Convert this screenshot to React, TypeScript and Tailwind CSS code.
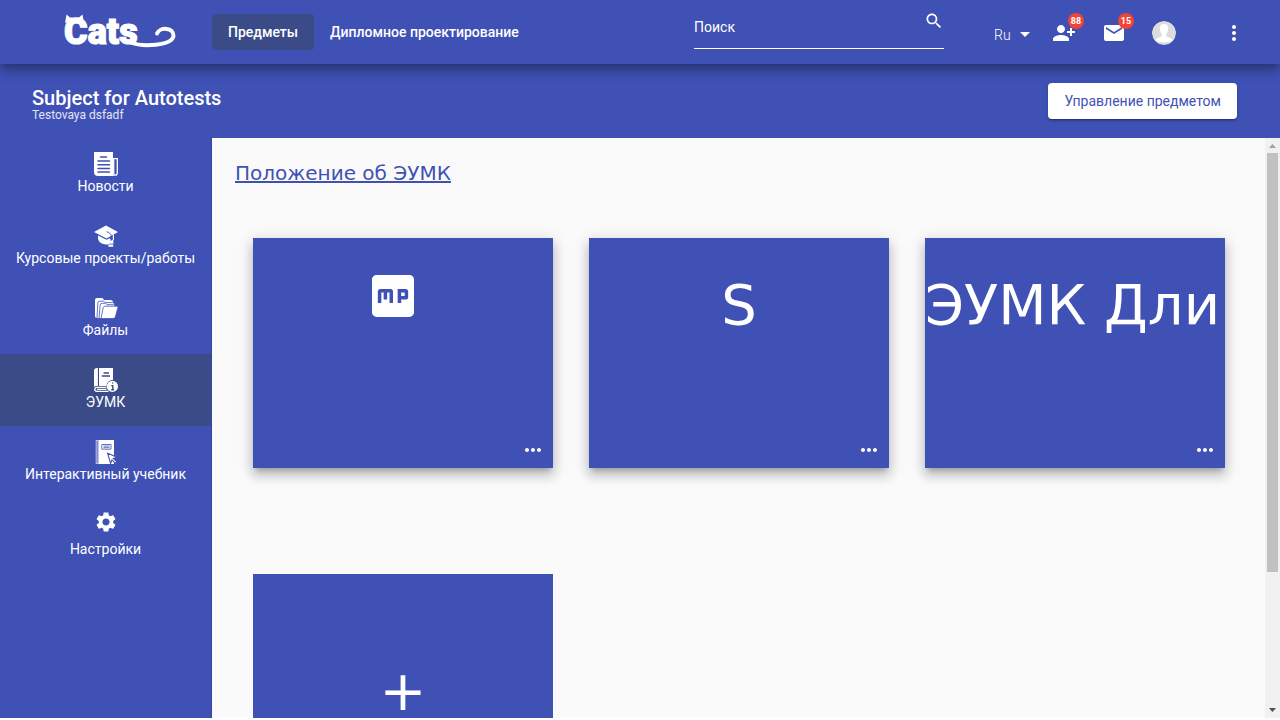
import type { ReactNode } from "react";

const P = ({ d }: { d: string }) => <path d={d} />;

function Icon({ children, className = "size-6" }: { children: ReactNode; className?: string }) {
  return (
    <svg viewBox="0 0 24 24" fill="currentColor" aria-hidden="true" className={`block shrink-0 ${className}`}>
      {children}
    </svg>
  );
}

function Logo() {
  return (
    <svg viewBox="0 0 114 46" className="block h-[46px] w-[114px]" role="img" aria-label="Cats" fill="#fff">
      <text x="2" y="35" fontSize="36" fontWeight="900" stroke="#fff" strokeWidth="1.2" className="font-['Roboto']">
        Cats
      </text>
      <path d="M3 14 L4.500 5.500 L8 8.500 H17 L20.500 5.500 L22 14 L16 11 H9Z" />
      <path
        d="M69 33.500 C80 38 110 37 111.500 27 C112 18.500 98 17.500 95 24.500"
        fill="none"
        stroke="#fff"
        strokeWidth="4"
        strokeLinecap="round"
      />
    </svg>
  );
}

const NewsIcon = () => (
  <Icon>
    <P d="M0 0h19v20.500q0 2.500 2 3.500H4q-4 0-4-4z" />
    <path d="M19.700 6.700h3.600v13.500q0 3-1.900 3t-1.700-3z" fill="#3f51b5" stroke="currentColor" strokeWidth="1.300" />
    <path d="M6.500 5h6M4 9H15.500M4 12.700H15.500M4 16.400H15.500M4 20H15.500" stroke="#3f51b5" strokeWidth="1.500" strokeLinecap="round" />
  </Icon>
);

const CapIcon = () => (
  <Icon>
    <P d="M12 1.500 24 8 12.500 14.400 0 8z" />
    <P d="M4 11.400l8.500 4.400 3.200-1.600 1 1.400-1.200 4.300q-6 2-10-1.800Q4 16.200 4 14z" />
    <path d="M12.500 7.800q4.700.8 5 5v3.500" fill="none" stroke="#3f51b5" strokeWidth="0.900" />
    <P d="M18.800 11.200l1.200-.7v5.400l-1.200.8zM15 17.400l4-1.600.6 3.700-3.800.2zM14.400 20.500h4.800v2.300h-4.800z" />
  </Icon>
);

const FilesIcon = () => (
  <Icon>
    <P d="M1 20V4q0-2 2-2h5.500L10 4h6.500q2.300 0 2.500 2v16H3q-2 0-2-2z" />
    <g stroke="#3f51b5" strokeWidth="0.800">
      <path d="M3 22.500 3.800 7q.1-1.800 2-1.800h4l1.200 1.400h7.700q2 0 1.800 2L19 22.500z" />
      <path d="M5 22.500 6.200 9q.2-1.700 2-1.700h3.500l1.300 1.400h6.500q1.800 0 1.600 1.800L19 22.500z" />
      <path d="M10.800 10.200h12.400q1 0 .8 1l-2.600 9.600q-.5 1.700-2.200 1.700H7l2.200-11q.4-1.300 1.600-1.300z" />
    </g>
  </Icon>
);

const BookInfoIcon = () => (
  <Icon>
    <P d="M0 3q0-3 3-3h.9v18H3q-2 0-3 1z" />
    <P d="M5 0h14v11.800q-6 1-6.500 6.200H5z" />
    <path d="M12.500 19.300H3q-2.200 0-2.200 2T3 23.300h11.500M3 21.300h9.500" fill="none" stroke="currentColor" strokeWidth="1.300" />
    <path d="M9.500 5h5.500M7.800 8H16" stroke="#3a4b87" strokeWidth="1.300" />
    <circle cx="18.400" cy="18.400" r="5.600" />
    <path d="M17.300 17.600h1.500v4M17.200 21.700h2.900M18.200 15h1" fill="none" stroke="#3a4b87" strokeWidth="1.400" />
  </Icon>
);

const TextbookIcon = () => (
  <Icon>
    <P d="M4.500 0H20v24H4.500z" />
    <path d="M2.200.4H4v23.200H2.200z" fill="none" stroke="currentColor" strokeWidth="0.700" />
    <path d="M7.800 4.500h9.200v4.700H7.800zM9.500 6.100h6M9.500 7.700h6" fill="none" stroke="#3f51b5" strokeWidth="0.800" />
    <path d="M13.600 13.300l9.400 3.900-3.700 1.300 3.600 3.400-1.500 1.500-3.500-3.500-1.300 3.500z" stroke="#3f51b5" strokeWidth="1.100" />
  </Icon>
);

const GearIcon = () => (
  <Icon>
    <P d="M19.14 12.94c.04-.3.06-.61.06-.94 0-.32-.02-.64-.07-.94l2.03-1.58c.18-.14.23-.41.12-.61l-1.92-3.32c-.12-.22-.37-.29-.59-.22l-2.39.96c-.5-.38-1.03-.7-1.62-.94l-.36-2.54c-.04-.24-.24-.41-.48-.41h-3.84c-.24 0-.43.17-.47.41l-.36 2.54c-.59.24-1.13.57-1.62.94l-2.39-.96c-.22-.08-.47 0-.59.22L2.74 8.87c-.12.21-.08.47.12.61l2.03 1.58c-.05.3-.09.63-.09.94s.02.64.07.94l-2.03 1.58c-.18.14-.23.41-.12.61l1.92 3.32c.12.22.37.29.59.22l2.39-.96c.5.38 1.03.7 1.62.94l.36 2.54c.05.24.24.41.48.41h3.84c.24 0 .44-.17.47-.41l.36-2.54c.59-.24 1.13-.56 1.62-.94l2.39.96c.22.08.47 0 .59-.22l1.92-3.32c.12-.22.07-.47-.12-.61l-2.01-1.58zM12 15.6c-1.98 0-3.6-1.62-3.6-3.6s1.62-3.6 3.6-3.6 3.6 1.62 3.6 3.6-1.62 3.6-3.6 3.6z" />
  </Icon>
);

const MpIcon = () => (
  <Icon className="size-14">
    <path
      fillRule="evenodd"
      d="M19 3H5c-1.100 0-2 .9-2 2v14c0 1.100.9 2 2 2h14c1.100 0 2-.9 2-2V5c0-1.100-.9-2-2-2zM5.500 15v-5c0-.55.45-1 1-1h4.500c.55 0 1 .45 1 1v5h-1.500v-4.500h-1v3H8v-3H7V15zM14 9h3.500c.55 0 1 .45 1 1v2.500c0 .55-.45 1-1 1h-2V15H14zm1.500 1.500V12H17v-1.500z"
    />
  </Icon>
);

const navItems = [
  { label: "Новости", icon: <NewsIcon /> },
  { label: "Курсовые проекты/работы", icon: <CapIcon /> },
  { label: "Файлы", icon: <FilesIcon /> },
  { label: "ЭУМК", icon: <BookInfoIcon />, active: true },
  { label: "Интерактивный учебник", icon: <TextbookIcon /> },
  { label: "Настройки", icon: <GearIcon />, spaced: true },
];

function Badge({ children }: { children: ReactNode }) {
  return (
    <span className="absolute -top-2 left-4 flex size-4 items-center justify-center rounded-full bg-[#f44336] text-[9px] leading-4 font-bold">
      {children}
    </span>
  );
}

function Card({ children }: { children: ReactNode }) {
  return (
    <article className="relative flex h-[230px] justify-center bg-[#3f51b5] text-white shadow-[0_5px_5px_-3px_rgba(0,0,0,0.2),0_8px_10px_1px_rgba(0,0,0,0.14),0_3px_14px_2px_rgba(0,0,0,0.12)]">
      {children}
      <button type="button" aria-label="Действия" className="absolute right-2 bottom-1.5">
        <Icon>
          <P d="M6 10c-1.100 0-2 .9-2 2s.9 2 2 2 2-.9 2-2-.9-2-2-2zm12 0c-1.100 0-2 .9-2 2s.9 2 2 2 2-.9 2-2-.9-2-2-2zm-6 0c-1.100 0-2 .9-2 2s.9 2 2 2 2-.9 2-2-.9-2-2-2z" />
        </Icon>
      </button>
    </article>
  );
}

function Header() {
  return (
    <header className="relative z-10 flex h-16 shrink-0 items-center bg-[#3f51b5] pr-[34px] shadow-[0_5px_5px_-3px_rgba(0,0,0,0.2),0_8px_10px_1px_rgba(0,0,0,0.14),0_3px_14px_2px_rgba(0,0,0,0.12)]">
      <a href="#home" className="w-[212px] pl-[62px]">
        <Logo />
      </a>
      <nav className="flex text-sm font-medium">
        <a href="#subjects" className="rounded bg-[#3a4b87] px-4 leading-9">
          Предметы
        </a>
        <a href="#diploma" className="rounded px-4 leading-9">
          Дипломное проектирование
        </a>
      </nav>
      <label className="mb-1 ml-auto flex h-[38px] w-[250px] items-start border-b border-white">
        <input
          type="text"
          aria-label="Поиск"
          placeholder="Поиск"
          className="h-8 min-w-0 flex-1 bg-transparent text-sm outline-none placeholder:text-white"
        />
        <Icon className="size-5">
          <P d="M15.500 14h-.79l-.28-.27C15.410 12.590 16 11.110 16 9.500 16 5.910 13.090 3 9.500 3S3 5.910 3 9.500 5.910 16 9.500 16c1.610 0 3.090-.59 4.230-1.570l.27.28v.79l5 4.990L20.490 19l-4.990-5zm-6 0C7.010 14 5 11.990 5 9.500S7.010 5 9.500 5 14 7.010 14 9.500 11.990 14 9.500 14z" />
        </Icon>
      </label>
      <div className="ml-[50px] flex items-center pt-0.5">
        <div className="relative mr-5">
          <select aria-label="Язык" className="block h-7 w-[38px] appearance-none bg-transparent pt-1 text-sm font-light text-white outline-none">
            <option>Ru</option>
          </select>
          <svg viewBox="0 0 10 5" fill="#fff" aria-hidden="true" className="pointer-events-none absolute top-[13px] right-0.5 h-[5px] w-2.5">
            <path d="M0 0h10L5 5z" />
          </svg>
        </div>
        <button type="button" aria-label="Заявки" className="relative mr-[26px]">
          <Icon className="size-6 -scale-x-100">
            <P d="M15 12c2.210 0 4-1.790 4-4s-1.790-4-4-4-4 1.790-4 4 1.790 4 4 4zm-9-2V7H4v3H1v2h3v3h2v-3h3v-2H6zm9 4c-2.670 0-8 1.340-8 4v2h16v-2c0-2.660-5.330-4-8-4z" />
          </Icon>
          <Badge>88</Badge>
        </button>
        <button type="button" aria-label="Сообщения" className="relative mr-[26px]">
          <Icon>
            <P d="M20 4H4c-1.100 0-1.990.9-1.990 2L2 18c0 1.100.9 2 2 2h16c1.100 0 2-.9 2-2V6c0-1.100-.9-2-2-2zm0 4l-8 5-8-5V6l8 5 8-5v2z" />
          </Icon>
          <Badge>15</Badge>
        </button>
        <button type="button" aria-label="Профиль" className="mr-[46px] overflow-hidden rounded-full">
          <Icon>
            <circle cx="12" cy="12" r="12" fill="#dcdcdc" />
            <path d="M12 3c-3 0-4.200 2-4.200 4.500 0 2.300.8 4.200 2 5.500v2c-.5 1.500-6 1.600-6.500 4.500Q7 21.500 12 21.500t8.700-2c-.5-2.900-6-3-6.500-4.500v-2c1.200-1.300 2-3.200 2-5.500C16.200 5 15 3 12 3z" fill="#fff" />
          </Icon>
        </button>
        <button type="button" aria-label="Меню">
          <Icon>
            <P d="M12 8c1.100 0 2-.9 2-2s-.9-2-2-2-2 .9-2 2 .9 2 2 2zm0 2c-1.100 0-2 .9-2 2s.9 2 2 2 2-.9 2-2-.9-2-2-2zm0 6c-1.100 0-2 .9-2 2s.9 2 2 2 2-.9 2-2-.9-2-2-2z" />
          </Icon>
        </button>
      </div>
    </header>
  );
}

export default function App() {
  return (
    <div className="h-screen bg-white pb-0.5 font-['Roboto',sans-serif] text-white">
      <div className="flex h-full flex-col overflow-hidden bg-[#3f51b5]">
        <Header />
        <section className="flex h-[74px] shrink-0 items-center justify-between pr-[43px] pl-8">
          <div className="pt-2">
            <h1 className="text-xl leading-5 font-medium">Subject for Autotests</h1>
            <p className="text-xs leading-[14px] text-white/85">Testovaya dsfadf</p>
          </div>
          <button
            type="button"
            className="h-9 rounded bg-white px-4 text-sm text-[#3f51b5] shadow-[0_3px_1px_-2px_rgba(0,0,0,0.2),0_2px_2px_0_rgba(0,0,0,0.14),0_1px_5px_0_rgba(0,0,0,0.12)]"
          >
            Управление предметом
          </button>
        </section>
        <div className="flex min-h-0 flex-1">
          <nav className="w-[212px] shrink-0 border-r border-black/12">
            {navItems.map(({ label, icon, active, spaced }) => (
              <a
                key={label}
                href={`#${label}`}
                className={`flex h-18 flex-col items-center text-sm ${active ? "bg-[#3a4b87]" : ""} ${
                  spaced ? "gap-[5px] pt-3" : "pt-3.5"
                }`}
              >
                {icon}
                <span>{label}</span>
              </a>
            ))}
          </nav>
          <main className="min-w-0 flex-1 overflow-hidden bg-[#fafafa] font-['DejaVu_Sans',sans-serif]">
            <a href="#regulations" className="mt-[21px] ml-[23px] block w-fit text-xl text-[#3f51b5] underline">
              Положение об ЭУМК
            </a>
            <div className="mt-[51px] grid grid-cols-[repeat(auto-fill,300px)] gap-x-9 gap-y-[106px] pr-10 pl-[41px] text-[56px] leading-[56px]">
              <Card>
                <div className="pt-[30px] pr-[21px]">
                  <MpIcon />
                </div>
              </Card>
              <Card>
                <div className="pt-[39px]">S</div>
              </Card>
              <Card>
                <div className="w-full overflow-hidden pt-[39px] whitespace-nowrap">ЭУМК Дли</div>
              </Card>
              <button type="button" aria-label="Добавить" className="flex h-[230px] items-center justify-center bg-[#3f51b5] pt-1">
                +
              </button>
            </div>
          </main>
          <div aria-hidden="true" className="flex w-[15px] shrink-0 flex-col items-center bg-[#f1f1f1]">
            <svg viewBox="0 0 15 15" className="block size-[15px] shrink-0" fill="#a3a3a3">
              <path d="M4 10h7L7.500 6z" />
            </svg>
            <div className="w-[11px] flex-[419] bg-[#c1c1c1]" />
            <div className="flex-[131]" />
            <svg viewBox="0 0 15 15" className="block size-[15px] shrink-0" fill="#505050">
              <path d="M4 5h7L7.500 9z" />
            </svg>
          </div>
        </div>
      </div>
    </div>
  );
}
